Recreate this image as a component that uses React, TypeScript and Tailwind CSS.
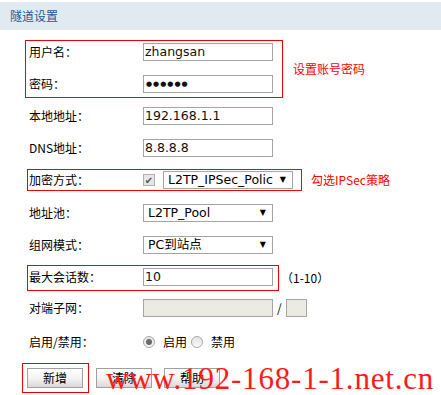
import React from 'react';

const font = { fontFamily: '"Noto Sans CJK SC", "DejaVu Sans", sans-serif' };
const inputFont = { fontFamily: '"DejaVu Sans", "Noto Sans CJK SC", sans-serif' };

const Label: React.FC<{ text: string }> = ({ text }) => (
  <div className="w-[114px] shrink-0 text-[12px] leading-[18px] text-black">{text}</div>
);

const TextInput: React.FC<{ value?: string; w?: string; disabled?: boolean; dots?: boolean }> = ({ value = '', w = 'w-[130px]', disabled, dots }) => (
  <div
    className={`${w} h-[18px] border border-[#a5a5a5] flex items-center pl-[1px] text-[12.5px] leading-[16px] ${
      disabled ? 'bg-[#ebebe4]' : 'bg-white text-[#111]'
    }`}
    style={inputFont}
  >
    {dots ? <span className="tracking-[1px] text-[7px] pl-[1px]">●●●●●●</span> : value}
  </div>
);

const Select: React.FC<{ value: string }> = ({ value }) => (
  <div
    className="w-[130px] h-[18px] border border-[#a5a5a5] bg-white flex items-center pl-[4px] pr-[6px] text-[12.5px] leading-[16px]"
    style={inputFont}
  >
    <span className="w-[105px] overflow-hidden whitespace-nowrap">{value}</span>
    <span className="ml-auto text-[8px]">▼</span>
  </div>
);

const Button: React.FC<{ text: string }> = ({ text }) => (
  <div className="w-[56px] h-[20px] border border-[#a0a0a0] bg-gradient-to-b from-white via-[#f4f4f4] to-[#d9d9d9] flex items-center justify-center text-[12px]">
    {text}
  </div>
);

const Radio: React.FC<{ checked?: boolean }> = ({ checked }) => (
  <div className="w-[12px] h-[12px] rounded-full border border-[#a8a8a8] bg-gradient-to-b from-[#e4e4e4] to-[#f8f8f8] flex items-center justify-center">
    {checked && <div className="w-[6px] h-[6px] rounded-full bg-[#6a6a6a]" />}
  </div>
);

export default function App() {
  return (
    <div className="relative w-[441px] h-[395px] bg-white overflow-hidden" style={font}>
      {/* header */}
      <div className="mt-[2px] h-[28px] bg-[#e2eaf1] pl-[10px] flex items-center text-[12px] text-[#1b5896]">隧道设置</div>

      {/* account */}
      <div className="flex items-center mt-[10px]">
        <div className="ml-[25px] w-[258px] border border-[#ee0000] pt-[2px] pb-[4px] pl-[3px] flex flex-col gap-[14px]">
          <div className="flex items-center">
            <Label text="用户名：" />
            <TextInput value="zhangsan" />
          </div>
          <div className="flex items-center">
            <Label text="密码：" />
            <TextInput dots />
          </div>
        </div>
        <div className="ml-[10px] text-[12px] text-[#ff0000]">设置账号密码</div>
      </div>

      <div className="ml-[29px] mt-[9px] flex flex-col gap-[14px]">
        <div className="flex items-center">
          <Label text="本地地址：" />
          <TextInput value="192.168.1.1" />
        </div>
        <div className="flex items-center">
          <Label text="DNS地址：" />
          <TextInput value="8.8.8.8" />
        </div>
      </div>

      {/* encryption */}
      <div className="flex items-center mt-[12px]">
        <div className="ml-[27px] w-[275px] border border-[#ee0000] pt-[1px] pb-[1px] pl-[1px] flex items-center">
          <Label text="加密方式：" />
          <div className="w-[12px] h-[12px] border border-[#b0b0b0] bg-[#e6e6e6] flex items-center justify-center text-[10px] text-[#555] leading-none">✔</div>
          <div className="ml-[8px]">
            <Select value="L2TP_IPSec_Policy" />
          </div>
        </div>
        <div className="ml-[9px] text-[12px] text-[#ff0000]">勾选IPSec策略</div>
      </div>

      <div className="ml-[29px] mt-[13px] flex flex-col gap-[14px]">
        <div className="flex items-center">
          <Label text="地址池：" />
          <Select value="L2TP_Pool" />
        </div>
        <div className="flex items-center">
          <Label text="组网模式：" />
          <Select value="PC到站点" />
        </div>
      </div>

      {/* sessions */}
      <div className="flex items-center mt-[11px]">
        <div className="ml-[27px] w-[252px] border border-[#ee0000] pt-[2px] pb-[4px] pl-[1px] flex items-center">
          <Label text="最大会话数：" />
          <TextInput value="10" />
        </div>
        <div className="ml-[2px] text-[12px]">（1-10）</div>
      </div>

      <div className="ml-[29px] mt-[8px] flex items-center">
        <Label text="对端子网：" />
        <TextInput disabled />
        <span className="mx-[4px] text-[12px]">/</span>
        <TextInput disabled w="w-[21px]" />
      </div>

      <div className="ml-[29px] mt-[16px] flex items-center">
        <Label text="启用/禁用：" />
        <Radio checked />
        <span className="ml-[8px] text-[12px]">启用</span>
        <div className="ml-[4px]">
          <Radio />
        </div>
        <span className="ml-[8px] text-[12px]">禁用</span>
      </div>

      {/* buttons */}
      <div className="mt-[12px] flex items-center">
        <div className="ml-[22px] w-[67px] h-[30px] border border-[#ee0000] pl-[4px] pt-[4px]">
          <Button text="新增" />
        </div>
        <div className="ml-[7px]">
          <Button text="清除" />
        </div>
        <div className="ml-[12px]">
          <Button text="帮助" />
        </div>
      </div>

      {/* watermark */}
      <div
        className="absolute left-[106px] top-[363px] text-[31px] font-normal leading-none tracking-[0.8px] text-[#ff1a1a] whitespace-nowrap"
        style={{ fontFamily: '"Liberation Serif", serif' }}
      >
        www.192-168-1-1.net.cn
      </div>
    </div>
  );
}
